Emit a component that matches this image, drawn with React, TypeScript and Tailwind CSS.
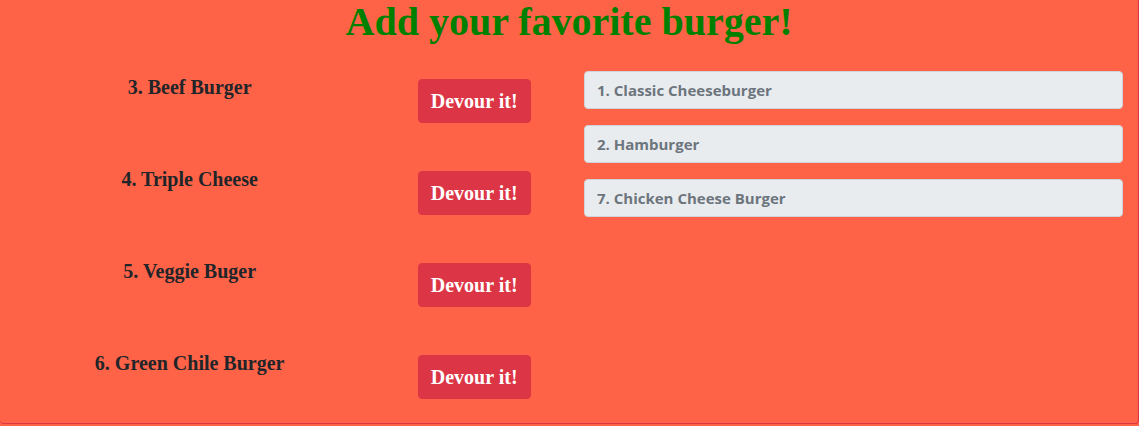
import React from "react";

const eaten = [
  "3. Beef Burger",
  "4. Triple Cheese",
  "5. Veggie Buger",
  "6. Green Chile Burger",
];

const devoured = [
  "1. Classic Cheeseburger",
  "2. Hamburger",
  "7. Chicken Cheese Burger",
];

export default function App() {
  return (
    <div className="min-h-screen w-full bg-[#ff6347]">
      <div className="h-[424px] w-full rounded-b border-r border-b border-[#dc3545] bg-[#ff6347]">
        {/* Title */}
        <h1 className="text-center font-['Liberation_Serif',serif] text-[40px] font-bold leading-[44px] text-[#008000]">
          Add your favorite burger!
        </h1>

        <div className="flex pt-[27px]">
          {/* Left: burgers waiting */}
          <div className="flex w-1/2 flex-col">
            {eaten.map((name) => (
              <div key={name} className="flex h-[92px] items-start">
                <div className="w-2/3 pt-[4px] text-center font-['Liberation_Serif',serif] text-[20px] font-bold leading-[24px] text-[#212529]">
                  {name}
                </div>
                <div className="flex w-1/3 justify-center pt-[8px]">
                  <button className="rounded border border-[#dc3545] bg-[#dc3545] px-3 py-1.5 font-['Liberation_Serif',serif] text-[20px] font-bold leading-[30px] text-white">
                    Devour it!
                  </button>
                </div>
              </div>
            ))}
          </div>

          {/* Right: devoured list */}
          <div className="flex w-1/2 flex-col gap-4 px-[15px]">
            {devoured.map((name) => (
              <input
                key={name}
                readOnly
                value={name}
                className="h-[38px] w-full rounded border border-[#ced4da] bg-[#e9ecef] px-3 font-['Open_Sans',sans-serif] text-[15px] font-bold text-[#6c757d] outline-none"
              />
            ))}
          </div>
        </div>
      </div>
    </div>
  );
}
